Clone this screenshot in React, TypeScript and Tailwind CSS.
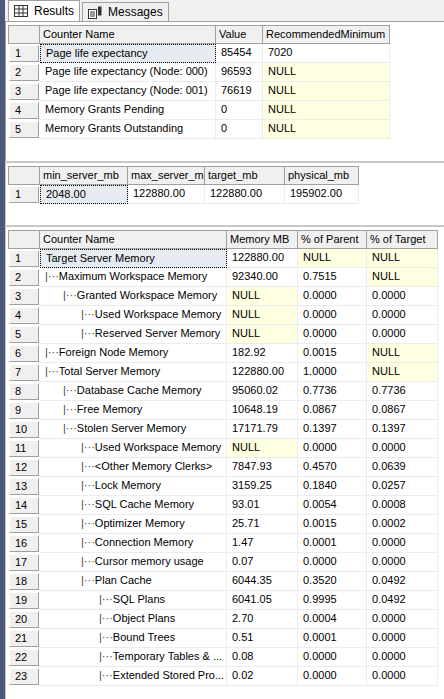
import React from "react";

type Cell = { v: string; nul?: boolean };

const c = (v: string): Cell => ({ v, nul: v === "NULL" });

function Grid({ cols, rows, tree }: { cols: { name: string; w: number }[]; rows: string[][]; tree?: number[] }) {
  return (
    <div className="flex flex-col">
      <div className="flex h-[19px]">
        <div className="w-[32px] shrink-0 border border-[#a0a0a0] bg-[#f0f0f0]" />
        {cols.map((col) => (
          <div
            key={col.name}
            style={{ width: col.w }}
            className="shrink-0 border border-l-0 border-[#a0a0a0] bg-[#f0f0f0] px-[3px] leading-[17px] whitespace-nowrap overflow-hidden"
          >
            {col.name}
          </div>
        ))}
      </div>
      {rows.map((r, i) => (
        <div key={i} className="flex h-[19px]">
          <div className="m-[1px] w-[30px] shrink-0 border border-t-white border-l-white border-r-[#a0a0a0] border-b-[#a0a0a0] bg-[#f0f0f0] px-[5px] leading-[15px]">
            {i + 1}
          </div>
          {r.map((v, j) => {
            const cell = c(v);
            const sel = i === 0 && j === 0;
            return (
              <div
                key={j}
                style={{ width: cols[j].w }}
                className={`shrink-0 whitespace-nowrap overflow-hidden border-r border-b leading-[17px] px-[5px] ${
                  sel ? "border border-dotted border-black bg-[#e5ebf1]" : "border-[#ececec]"
                } ${cell.nul ? "bg-[#ffffe1]" : ""}`}
              >
                {tree && j === 0 && tree[i] > 0 ? (
                  <span style={{ paddingLeft: (tree[i] - 1) * 18 }}>
                    <span className="text-[#444]">|···</span>
                    {v}
                  </span>
                ) : (
                  v
                )}
              </div>
            );
          })}
        </div>
      ))}
    </div>
  );
}

const t3: [number, string, string, string, string][] = [
  [0, "Target Server Memory", "122880.00", "NULL", "NULL"],
  [1, "Maximum Workspace Memory", "92340.00", "0.7515", "NULL"],
  [2, "Granted Workspace Memory", "NULL", "0.0000", "0.0000"],
  [3, "Used Workspace Memory", "NULL", "0.0000", "0.0000"],
  [3, "Reserved Server Memory", "NULL", "0.0000", "0.0000"],
  [1, "Foreign Node Memory", "182.92", "0.0015", "NULL"],
  [1, "Total Server Memory", "122880.00", "1.0000", "NULL"],
  [2, "Database Cache Memory", "95060.02", "0.7736", "0.7736"],
  [2, "Free Memory", "10648.19", "0.0867", "0.0867"],
  [2, "Stolen Server Memory", "17171.79", "0.1397", "0.1397"],
  [3, "Used Workspace Memory", "NULL", "0.0000", "0.0000"],
  [3, "<Other Memory Clerks>", "7847.93", "0.4570", "0.0639"],
  [3, "Lock Memory", "3159.25", "0.1840", "0.0257"],
  [3, "SQL Cache Memory", "93.01", "0.0054", "0.0008"],
  [3, "Optimizer Memory", "25.71", "0.0015", "0.0002"],
  [3, "Connection Memory", "1.47", "0.0001", "0.0000"],
  [3, "Cursor memory usage", "0.07", "0.0000", "0.0000"],
  [3, "Plan Cache", "6044.35", "0.3520", "0.0492"],
  [4, "SQL Plans", "6041.05", "0.9995", "0.0492"],
  [4, "Object Plans", "2.70", "0.0004", "0.0000"],
  [4, "Bound Trees", "0.51", "0.0001", "0.0000"],
  [4, "Temporary Tables & ...", "0.08", "0.0000", "0.0000"],
  [4, "Extended Stored Pro...", "0.02", "0.0000", "0.0000"],
];

export default function App() {
  return (
    <div className="flex h-[699px] w-[444px] overflow-hidden bg-white text-[11px] text-black" style={{ fontFamily: '"Liberation Sans", Arial, sans-serif' }}>
      <div className="w-[5px] shrink-0 bg-[#4a5a78]" />
      <div className="flex flex-1 flex-col">
        <div className="flex h-[22px] items-end gap-[2px] border-b border-[#a0a0a0] bg-[#f0f0f0] pl-[3px] text-[12px]">
          <div className="flex h-[21px] items-center gap-[6px] border border-b-0 border-[#a0a0a0] bg-white px-[5px]">
            <svg width="14" height="12" viewBox="0 0 14 12"><rect x="0.5" y="0.5" width="13" height="11" fill="none" stroke="#333" /><path d="M0.5 4h13M0.5 8h13M5 0.5v11M9 0.5v11" stroke="#333" /></svg>
            Results
          </div>
          <div className="flex h-[19px] items-center gap-[6px] border border-b-0 border-[#a0a0a0] bg-[#f0f0f0] px-[5px]">
            <svg width="14" height="13" viewBox="0 0 14 13"><rect x="0.5" y="3.5" width="8" height="9" fill="white" stroke="#333" /><path d="M2 6h5M2 8h5M2 10h5" stroke="#333" /><rect x="10" y="0.5" width="3.5" height="9" fill="#333" /></svg>
            Messages
          </div>
        </div>
        <div className="flex h-[139px] flex-col border-l border-[#a0a0a0] pl-[2px] pt-[3px]">
          <Grid
            cols={[{ name: "Counter Name", w: 176 }, { name: "Value", w: 47 }, { name: "RecommendedMinimum", w: 127 }]}
            rows={[
              ["Page life expectancy", "85454", "7020"],
              ["Page life expectancy (Node: 000)", "96593", "NULL"],
              ["Page life expectancy (Node: 001)", "76619", "NULL"],
              ["Memory Grants Pending", "0", "NULL"],
              ["Memory Grants Outstanding", "0", "NULL"],
            ]}
          />
        </div>
        <div className="flex h-[64px] flex-col border-l border-t-2 border-[#c8c8c8] pl-[2px] pt-[3px]">
          <Grid
            cols={[{ name: "min_server_mb", w: 88 }, { name: "max_server_mb", w: 77 }, { name: "target_mb", w: 80 }, { name: "physical_mb", w: 74 }]}
            rows={[["2048.00", "122880.00", "122880.00", "195902.00"]]}
          />
        </div>
        <div className="flex flex-1 flex-col border-l border-t-2 border-[#c8c8c8] pl-[2px] pt-[3px]">
          <Grid
            cols={[{ name: "Counter Name", w: 187 }, { name: "Memory MB", w: 71 }, { name: "% of Parent", w: 69 }, { name: "% of Target", w: 71 }]}
            rows={t3.map((r) => [r[1], r[2], r[3], r[4]])}
            tree={t3.map((r) => r[0])}
          />
        </div>
      </div>
    </div>
  );
}
